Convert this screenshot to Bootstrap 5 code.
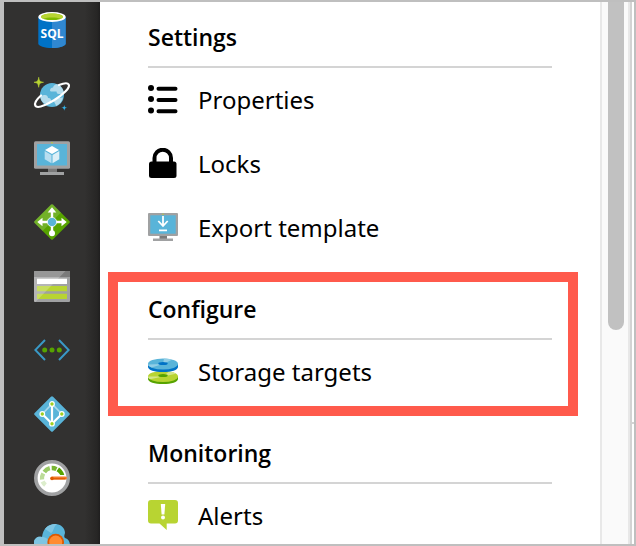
<!DOCTYPE html>
<html lang="en">
<head>
<meta charset="utf-8">
<meta name="viewport" content="width=device-width, initial-scale=1">
<title>Settings</title>
<link href="https://cdn.jsdelivr.net/npm/bootstrap@5.3.0/dist/css/bootstrap.min.css" rel="stylesheet">
<style>
body { font-family: "Noto Sans", "Open Sans", sans-serif; color: #000; }
.frame { border: 2px solid #bfbfbf; border-left-width: 4px; }
.rail { width: 96px; gap: 28px; padding-top: 10px; background: linear-gradient(to right, #323130 84%, #272625 97%, #1f1e1e); }
.rail a, .rail svg { display: block; width: 36px; height: 36px; flex: none; }
.menu { padding: 0 22px 0 8px; }
.group { border: 10px solid transparent; padding: 11px 16px 2px 30px; }
.group:first-child { border-top-width: 8px; }
.group.marked { border-color: #ff5a4c; }
.group h2 { font-family: "Open Sans", "Noto Sans", sans-serif; font-size: 23px; line-height: 32px; font-weight: 600; padding-bottom: 13px; border-bottom: 2px solid #d4d4d4; }
.entry { height: 64px; gap: 20px; font-size: 24px; line-height: 32px; color: #000; }
.entry svg { width: 30px; height: 30px; flex: none; margin-bottom: 2px; }
.track { width: 30px; padding: 0 4px 0 6px; background: #fafafa; border: solid #e8e8e8; border-width: 0 2px; }
.thumb { height: 60.5%; background: #c1c1c1; border-radius: 0 0 8px 8px; }
.edge { width: 4px; border-left: 2px solid #d3d3d3; }
.edge div { height: 422px; border-bottom: 2px solid #d3d3d3; }
</style>
<script src="https://cdn.jsdelivr.net/npm/bootstrap@5.3.0/dist/js/bootstrap.bundle.min.js"></script>
</head>
<body>
<div class="frame d-flex vh-100 overflow-hidden">
  <nav class="rail d-flex flex-column align-items-center flex-shrink-0 overflow-hidden" aria-label="Services">
    <a href="#" aria-label="SQL databases"><svg viewBox="0 0 36 36">
      <path fill="#0072c6" d="M4.300 5v26.500C4.300 34 10.400 36 18 36s13.700-2 13.700-4.500V5z"/>
      <path fill="#3087d0" d="M18 5v31c7.600 0 13.700-2 13.700-4.500V5z"/>
      <ellipse cx="18" cy="5" rx="13.700" ry="5" fill="#fff"/>
      <ellipse cx="18" cy="4.800" rx="11" ry="3.300" fill="#7fba00"/>
      <path fill="#b8d432" d="M26.700 6.800c1.500-.6 2.300-1.300 2.300-2C29 3 24 1.500 18 1.500S7 3 7 4.800c0 .7.800 1.400 2.200 2C11.300 6 14.500 5.500 18 5.500s6.700.5 8.700 1.300z"/>
      <text x="18" y="25.500" text-anchor="middle" font-family="Open Sans, sans-serif" font-weight="700" font-size="12" fill="#fff">SQL</text></svg></a>
    <a href="#" aria-label="Cosmos DB"><svg viewBox="0 0 36 36" overflow="visible">
      <circle cx="18" cy="19" r="12" fill="#59b4d9"/>
      <path fill="#b5dcec" d="M16 14.500c0-2 1.500-3 3-3 .5-2.500 3-4 5-3 4 2 6 6 6 10-2-1-3 0-5-.5-2 0-2.500-1.500-2.500-2.500H18c-1.500 0-2-.5-2-1zM6.500 22c0-2 2-3.500 4.500-3 2 0 3 1.500 3 3 2-.3 3.300 1 3 3-.3 1.500-2 2-3 2l-4 .5C8 25.500 7 24 6.500 22zM20 25c0-2 2-3 4-3l5-.5c-1 4-3 7-7 8.500 0-2-2-3-2-5z"/>
      <path fill="none" stroke="#fff" stroke-width="2.200" stroke-linecap="round" d="M7 19.500C2.500 23.500 .3 27.500 1.300 29.600c1.800 3 10-.2 18.700-5.300C29.500 18.500 36.500 11.500 34.700 8.500c-1-1.700-5-1.300-9.700.6"/>
      <path fill="#b8d432" d="M4.700 1.300C5.200 5 6 5.800 9.500 6.300 6 6.800 5.200 7.600 4.700 11.300 4.200 7.600 3.400 6.800 0 6.300 3.400 5.800 4.200 5 4.700 1.300z" stroke="#b8d432" stroke-width=".6"/>
      <path fill="#32b1e8" d="M30.300 28.700c.3 2.300.8 2.800 3 3-2.200.3-2.700.8-3 3-.3-2.200-.8-2.700-3-3 2.200-.2 2.700-.7 3-3z"/></svg></a>
    <a href="#" aria-label="Virtual machines"><svg viewBox="0 0 36 36">
      <path fill="#7a7a7a" d="M14 27h9v5h-9z"/><path fill="#a0a1a2" d="M6 32h24v3H6z"/>
      <rect y="1.300" width="36" height="27.400" rx="1.500" fill="#a0a1a2"/>
      <path fill="#59b4d9" d="M3 4h30v21.500H3z"/>
      <circle cx="18" cy="2.700" r=".8" fill="#b8d432"/>
      <path fill="#fff" d="M18 6l7 4-7 4-7-4z"/><path fill="#b8def0" d="M10.700 11l6.800 4v8.300l-6.800-4z"/><path fill="#dceff7" d="M25.300 11l-6.800 4v8.300l6.800-4z"/></svg></a>
    <a href="#" aria-label="Load balancers"><svg viewBox="0 0 36 36">
      <rect x="5" y="5" width="26" height="26" rx="1.500" transform="rotate(45 18 18)" fill="#57a300"/>
      <path fill="#fff" opacity=".16" d="M17 .5q1-1 2 0l8 8L8.500 27 .5 19q-1-1 0-2z"/>
      <path stroke="#fff" stroke-width="2.400" d="M18 7v22M7 18h22"/>
      <path fill="#fff" d="M18 3.300l4.300 5.200h-8.600zM3.300 18l5.200-4.300v8.600zM32.700 18l-5.200-4.300v8.600z"/>
      <circle cx="18" cy="29.300" r="3" fill="#fff"/><circle cx="18" cy="18" r="4.600" fill="#59b4d9" stroke="#fff" stroke-width=".8"/></svg></a>
    <a href="#" aria-label="Storage accounts"><svg viewBox="0 0 36 36">
      <rect y="3" width="36" height="31" rx="1" fill="#a0a1a2"/><path fill="#7a7a7a" d="M0 9V4q0-1 1-1h34q1 0 1 1v5z"/>
      <path fill="#fff" d="M3 10.700h30V16H3z"/><path fill="#b8d432" d="M3 18h30v5.300H3zM3 25.700h30V31H3z"/>
      <path fill="#fff" opacity=".22" d="M1 3h30.500L1.500 34H1q-1 0-1-1V4q0-1 1-1z"/></svg></a>
    <a href="#" aria-label="Virtual networks"><svg viewBox="0 0 36 36">
      <path fill="none" stroke="#3999c6" stroke-width="2" d="M11 8L1.300 18 11 28M25 8l9.700 10L25 28"/>
      <g fill="#57a300"><circle cx="10.700" cy="18" r="2.500"/><circle cx="18" cy="18" r="2.500"/><circle cx="25.300" cy="18" r="2.500"/></g></svg></a>
    <a href="#" aria-label="Active Directory"><svg viewBox="0 0 36 36">
      <rect x="5" y="5" width="26" height="26" rx="1.500" transform="rotate(45 18 18)" fill="#59b4d9"/>
      <path fill="none" stroke="#acdaec" stroke-width="1.600" d="M8.300 18L18 8l9.800 10"/><path fill="none" stroke="#fff" stroke-width="2.200" d="M8.300 18l9.700 9.700 9.800-9.700M18 8v19"/>
      <g fill="#9fcf20" stroke="#fff" stroke-width="1.200"><circle cx="18" cy="8" r="2.300"/><circle cx="8.300" cy="18" r="2.300"/><circle cx="27.800" cy="18" r="2.300"/><circle cx="18" cy="27.700" r="2.300"/></g></svg></a>
    <a href="#" aria-label="Monitor"><svg viewBox="0 0 36 36">
      <circle cx="18" cy="18" r="16.200" fill="#fff" stroke="#a0a1a2" stroke-width="3.600"/>
      <g fill="none" stroke-width="4.300"><path stroke="#dcedcc" d="M11.500 25A10 10 0 0 1 8.600 21.500"/><path stroke="#bcdc99" d="M8 19.500a10 10 0 0 1 1.300-6"/><path stroke="#9aca66" d="M10.300 12a10 10 0 0 1 5.500-3.800"/><path stroke="#79b533" d="M17.700 8a10 10 0 0 1 4.800 1.100"/></g>
      <path fill="#57a300" d="M25 7.500l-2.500 3.800c1.700 1 3 2.200 3.800 3.700h4c-.8-3-2.500-5.500-5.300-7.500z"/>
      <path stroke="#f47a2b" stroke-width="3" stroke-linecap="round" d="M18 18h13.500"/><path stroke="#dd5900" stroke-width="1.300" d="M17 18.800h14.500"/><circle cx="18" cy="18.500" r="1.800" fill="#dd5900"/></svg></a>
    <a href="#" aria-label="Security"><svg viewBox="0 0 36 36">
      <path fill="#59b4d9" d="M7 26a7 7 0 0 1-7-8c.5-4 4-6 8-5 1-8 6-13 13-13 6 0 10 4 10 9-1 3-1 4 0 5 4 1 5 5 5 7 0 3-3 5-6 5z"/>
      <path fill="#7fc5e2" d="M0 18c.5-4 4-6 8-5 4 0 7 2 8 7H0zM11 5c4-5 9-5 12-5-4 3-3 8-6 9z"/>
      <circle cx="21.700" cy="18" r="8.300" fill="#dd5900"/><circle cx="21.700" cy="18" r="6.500" fill="#ff8c32"/></svg></a>
  </nav>
  <main class="menu flex-grow-1 overflow-hidden">
    <section class="group">
      <h2 class="m-0">Settings</h2>
      <a class="entry d-flex align-items-center text-decoration-none" href="#"><svg viewBox="0 0 30 30" aria-hidden="true"><g><circle cx="3" cy="4" r="3"/><circle cx="3" cy="15" r="3"/><circle cx="3" cy="26.500" r="3"/><path stroke="#000" stroke-width="4" stroke-linecap="round" d="M10.500 4.700h17M10.500 16h17M10.500 27.300h17"/></g></svg><span>Properties</span></a>
      <a class="entry d-flex align-items-center text-decoration-none" href="#"><svg viewBox="0 0 30 30" aria-hidden="true"><rect x="1" y="13.500" width="27.500" height="16.500" rx="2.500"/><path fill="none" stroke="#000" stroke-width="4" d="M6.500 15V10a8 8 0 0 1 16.500 0V15"/></svg><span>Locks</span></a>
      <a class="entry d-flex align-items-center text-decoration-none" href="#"><svg viewBox="0 0 30 30" aria-hidden="true"><path fill="#7a7a7a" d="M11.500 23h7.500v4h-7.500z"/><path fill="#a0a1a2" d="M5 26.500h20V29H5z"/><rect y="1" width="30" height="23" rx="1" fill="#a0a1a2"/><path fill="#59b4d9" d="M2.300 3.300h25.400v18.400H2.300z"/><circle cx="15" cy="2.200" r=".7" fill="#b8d432"/><path fill="none" stroke="#fff" stroke-width="1.800" d="M15 4v9.500M10.300 9l4.700 5 4.700-5M11 18.300h8"/></svg><span>Export template</span></a>
    </section>
    <section class="group marked">
      <h2 class="m-0">Configure</h2>
      <a class="entry d-flex align-items-center text-decoration-none" href="#"><svg viewBox="0 0 30 30" aria-hidden="true">
        <path fill="#57a300" d="M0 20v3c0 3 6.500 5 15 5s15-2 15-5v-3z"/><ellipse cx="15" cy="20.500" rx="15" ry="5.500" fill="#b8d432"/><path fill="#d5e68a" d="M15 20.500L2 23.300C.5 22.500 0 21.500 0 20.500zM15 20.500L21 15.500c3 .4 5.500 1.100 7 2.200z"/><ellipse cx="15" cy="19.500" rx="4.700" ry="1.500" fill="#57a300"/>
        <path fill="#0072c6" d="M0 8v3c0 3 6.500 5 15 5s15-2 15-5V8z"/><ellipse cx="15" cy="8" rx="15" ry="5.500" fill="#59b4d9"/><path fill="#91cee6" d="M15 8L3.500 11.500C1 10.500 0 9.500 0 8.500zM15 8l1-5.500c3 0 6 .5 8 1.200z"/><ellipse cx="15" cy="7.500" rx="4.700" ry="1.500" fill="#0072c6"/></svg><span>Storage targets</span></a>
    </section>
    <section class="group">
      <h2 class="m-0">Monitoring</h2>
      <a class="entry d-flex align-items-center text-decoration-none" href="#"><svg viewBox="0 0 30 30" aria-hidden="true"><path fill="#b8d432" d="M3 0h24q3 0 3 3v17.500q0 3-3 3h-8.300V30l-7.200-6.500H3q-3 0-3-3V3q0-3 3-3z"/><path fill="#fff" d="M12.800 4h4.400l-.8 10.500h-2.800z"/><circle cx="15" cy="17.500" r="2" fill="#fff"/></svg><span>Alerts</span></a>
    </section>
  </main>
  <div class="track flex-shrink-0"><div class="thumb"></div></div>
  <div class="edge flex-shrink-0"><div></div></div>
</div>
</body>
</html>
